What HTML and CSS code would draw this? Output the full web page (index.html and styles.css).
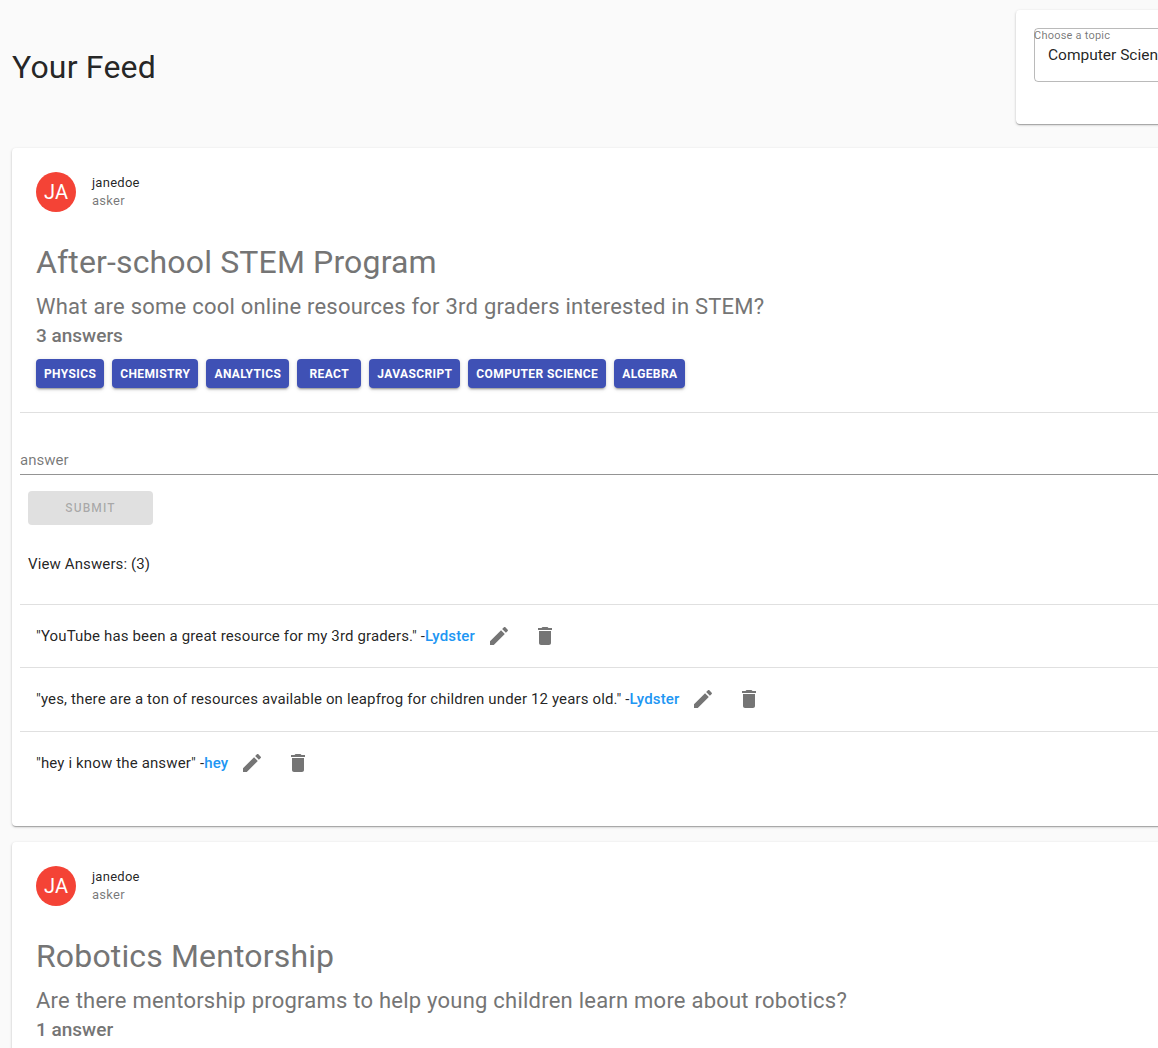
FILE: index.html
```html
<!DOCTYPE html>
<html lang="en">
<head>
<meta charset="utf-8">
<title>Your Feed</title>
<link rel="stylesheet" href="styles.css">
</head>
<body>
<main class="page">
  <header class="top">
    <h1 class="feed-title">Your Feed</h1>
    <section class="topic-card">
      <div class="topic-field">
        <div class="topic-label">Choose a topic</div>
        <span class="topic-value">Computer Science</span>
      </div>
    </section>
  </header>

  <article class="card">
    <div class="card-head">
      <div class="avatar">JA</div>
      <div class="who"><div class="who-name">janedoe</div><div class="who-role">asker</div></div>
    </div>
    <div class="card-body">
      <h2 class="post-title">After-school STEM Program</h2>
      <p class="post-question">What are some cool online resources for 3rd graders interested in STEM?</p>
      <p class="post-count">3 answers</p>
      <div class="tags">
        <button class="tag">Physics</button>
        <button class="tag">Chemistry</button>
        <button class="tag">Analytics</button>
        <button class="tag">React</button>
        <button class="tag">Javascript</button>
        <button class="tag">Computer Science</button>
        <button class="tag">Algebra</button>
      </div>
    </div>
    <hr class="rule">
    <div class="answer-input">answer</div>
    <button class="submit" disabled>Submit</button>
    <p class="view-answers">View Answers: (3)</p>
    <ul class="answers">
      <li class="answer"><span class="answer-text">"YouTube has been a great resource for my 3rd graders." -<b class="author">Lydster</b></span>
        <span class="icon-btn"><svg viewBox="0 0 24 24"><path d="M3 17.25V21h3.75L17.81 9.94l-3.75-3.75L3 17.25zM20.71 7.04c.39-.39.39-1.02 0-1.41l-2.34-2.34c-.39-.39-1.02-.39-1.41 0l-1.83 1.83 3.75 3.75 1.83-1.83z"/></svg></span>
        <span class="icon-btn"><svg viewBox="0 0 24 24"><path d="M6 19c0 1.1.9 2 2 2h8c1.1 0 2-.9 2-2V7H6v12zM19 4h-3.5l-1-1h-5l-1 1H5v2h14V4z"/></svg></span></li>
      <li class="answer"><span class="answer-text">"yes, there are a ton of resources available on leapfrog for children under 12 years old." -<b class="author">Lydster</b></span>
        <span class="icon-btn"><svg viewBox="0 0 24 24"><path d="M3 17.25V21h3.75L17.81 9.94l-3.75-3.75L3 17.25zM20.71 7.04c.39-.39.39-1.02 0-1.41l-2.34-2.34c-.39-.39-1.02-.39-1.41 0l-1.83 1.83 3.75 3.75 1.83-1.83z"/></svg></span>
        <span class="icon-btn"><svg viewBox="0 0 24 24"><path d="M6 19c0 1.1.9 2 2 2h8c1.1 0 2-.9 2-2V7H6v12zM19 4h-3.5l-1-1h-5l-1 1H5v2h14V4z"/></svg></span></li>
      <li class="answer"><span class="answer-text">"hey i know the answer" -<b class="author">hey</b></span>
        <span class="icon-btn"><svg viewBox="0 0 24 24"><path d="M3 17.25V21h3.75L17.81 9.94l-3.75-3.75L3 17.25zM20.71 7.04c.39-.39.39-1.02 0-1.41l-2.34-2.34c-.39-.39-1.02-.39-1.41 0l-1.83 1.83 3.75 3.75 1.83-1.83z"/></svg></span>
        <span class="icon-btn"><svg viewBox="0 0 24 24"><path d="M6 19c0 1.1.9 2 2 2h8c1.1 0 2-.9 2-2V7H6v12zM19 4h-3.5l-1-1h-5l-1 1H5v2h14V4z"/></svg></span></li>
    </ul>
  </article>

  <article class="card">
    <div class="card-head">
      <div class="avatar">JA</div>
      <div class="who"><div class="who-name">janedoe</div><div class="who-role">asker</div></div>
    </div>
    <div class="card-body">
      <h2 class="post-title">Robotics Mentorship</h2>
      <p class="post-question">Are there mentorship programs to help young children learn more about robotics?</p>
      <p class="post-count">1 answer</p>
    </div>
  </article>
</main>
</body>
</html>
```
FILE: styles.css
```css
* { box-sizing: border-box; }
html, body { margin: 0; height: 100%; overflow: hidden; }
body { background: #fafafa; color: rgba(0,0,0,.87); font-family: Roboto, "Liberation Sans", sans-serif; }
.page { width: 1400px; padding: 10px 0 0 12px; }
.top { display: flex; align-items: center; justify-content: space-between; height: 114px; margin-bottom: 24px; }
.feed-title { margin: 0; font-size: 32px; font-weight: 400; line-height: 38px; letter-spacing: .2px; }
.topic-card { width: 384px; height: 114px; padding: 18px; background: #fff; border-radius: 4px; box-shadow: 0 1px 3px rgba(0,0,0,.2), 0 1px 1px rgba(0,0,0,.14), 0 2px 1px -1px rgba(0,0,0,.12); }
.topic-field { height: 54px; border: 1px solid rgba(0,0,0,.27); border-radius: 4px; }
.topic-label { margin-left: -1px; font-size: 11px; line-height: 13px; color: rgba(0,0,0,.54); letter-spacing: .02em; }
.topic-value { display: block; margin: 4px 0 0 13px; font-size: 15.5px; line-height: 19px; }
.card { background: #fff; border-radius: 4px; padding: 8px; margin-bottom: 16px; box-shadow: 0 1px 3px rgba(0,0,0,.2), 0 1px 1px rgba(0,0,0,.14), 0 2px 1px -1px rgba(0,0,0,.12); }
.card-head { display: flex; align-items: center; padding: 16px; }
.avatar { width: 40px; height: 40px; margin-right: 16px; border-radius: 50%; background: #f44336; color: #fff; font-size: 20px; display: flex; align-items: center; justify-content: center; }
.who-name, .who-role { font-size: 13px; line-height: 18px; letter-spacing: .02em; }
.who-role { color: rgba(0,0,0,.54); }
.card-body { padding: 0 16px 16px; }
.post-title { margin: 13px 0 0; font-size: 32px; font-weight: 400; line-height: 42px; color: #757575; letter-spacing: .15px; }
.post-question { margin: 9px 0 0; font-size: 22px; line-height: 29px; color: #757575; letter-spacing: .23px; }
.post-count { margin: 1px 0 0; font-size: 19px; font-weight: 500; line-height: 27px; color: #757575; }
.tags { display: flex; gap: 8px; margin-top: 10px; padding-bottom: 8px; }
.tag { min-width: 64px; height: 29px; padding: 0 8px; border: 0; border-radius: 4px; background: #3f51b5; color: #fff; font: 700 12px Roboto, sans-serif; letter-spacing: .385px; text-transform: uppercase; box-shadow: 0 3px 1px -2px rgba(0,0,0,.2), 0 2px 2px rgba(0,0,0,.14), 0 1px 5px rgba(0,0,0,.12); }
.rule { height: 1px; margin: 0; border: 0; background: rgba(0,0,0,.12); }
.answer-input { margin-top: 37px; height: 25px; font-size: 15px; line-height: 20px; color: rgba(0,0,0,.54); border-bottom: 1px solid rgba(0,0,0,.42); }
.submit { display: block; width: 125px; height: 34px; margin: 16px 0 0 8px; border: 0; border-radius: 4px; background: #e0e0e0; color: rgba(0,0,0,.26); font: 500 12px Roboto, sans-serif; letter-spacing: 1.1px; text-transform: uppercase; }
.view-answers { margin: 29px 0 0 8px; font-size: 15px; line-height: 20px; letter-spacing: .12px; }
.answers { list-style: none; margin: 30px 0 0; padding: 0 0 23px; border-top: 1px solid rgba(0,0,0,.12); }
.answer { display: flex; align-items: center; height: 63px; padding-left: 16px; font-size: 15px; border-bottom: 1px solid rgba(0,0,0,.12); letter-spacing: .14px; }
.answer:nth-child(2) { height: 64px; padding-bottom: 1px; }
.answer:last-child { border-bottom: 0; padding-bottom: 2px; }
.author { color: #2196f3; font-weight: 500; }
.icon-btn { width: 46px; height: 48px; display: flex; align-items: center; justify-content: center; }
.answer-text { margin-right: 1px; }
.icon-btn svg { width: 24px; height: 24px; fill: #757575; }
```
